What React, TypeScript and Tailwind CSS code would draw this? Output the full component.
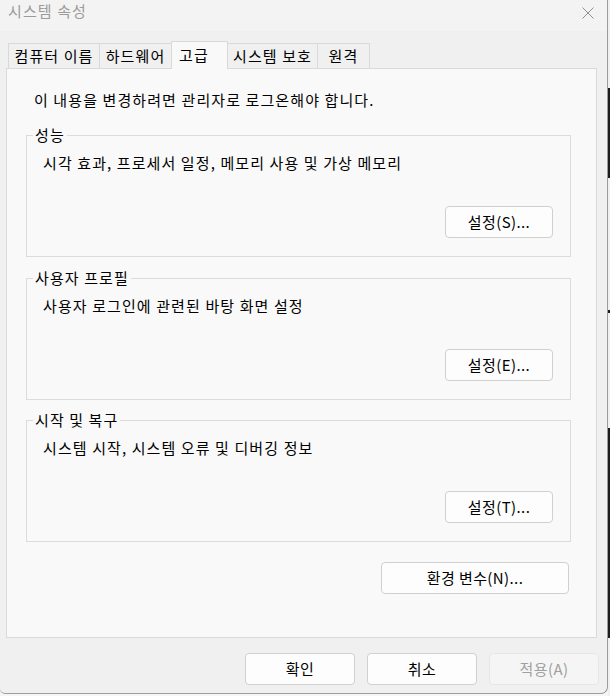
import React from "react";

function Btn({ label, w, disabled }: { label: string; w: string; disabled?: boolean }) {
  return (
    <div
      className={
        "h-[32px] flex items-center justify-center rounded-[4px] border leading-[20px] tracking-[0.4px] " +
        w +
        (disabled
          ? " bg-[#f5f5f5] border-[#e6e6e6] text-[#a0a0a0]"
          : " bg-[#fdfdfd] border-[#d0d0d0] text-black")
      }
    >
      {label}
    </div>
  );
}

function Group({ title, desc, btn, mt }: { title: string; desc: string; btn: string; mt: string }) {
  return (
    <fieldset className={"ml-[19px] w-[545px] h-[132px] border border-[#dcdcdc] flex flex-col " + mt}>
      <legend className="ml-[6px] px-[2px] leading-[20px]">{title}</legend>
      <div className="mt-[8px] ml-[16px] leading-[20px]">{desc}</div>
      <div className="mt-[33px] self-end mr-[17px]">
        <Btn label={btn} w="w-[108px]" />
      </div>
    </fieldset>
  );
}

export default function App() {
  return (
    <div className="w-[610px] h-[696px] bg-[#f6f6f6] flex overflow-hidden font-['Noto_Sans_CJK_KR','Noto_Sans',sans-serif] text-[15px] tracking-[1.1px] text-black">
      <div className="w-[608px] h-[694px] shrink-0 flex flex-col bg-[#f0f0f0] border-r border-b border-[#9c9c9c] rounded-br-[7px] rounded-bl-[5px] overflow-hidden">
        {/* title bar */}
        <div className="h-[31px] shrink-0 bg-[#f3f3f3] flex items-start justify-between pl-[8px] pr-[13px]">
          <div className="mt-[1px] leading-[20px] text-[#9b9b9b]">시스템 속성</div>
          <svg className="mt-[7px]" width="12" height="12" viewBox="0 0 12 12">
            <path d="M0.5 0.5 L11.5 11.5 M11.5 0.5 L0.5 11.5" stroke="#8f8f8f" strokeWidth="1" fill="none" />
          </svg>
        </div>
        {/* body */}
        <div className="flex-1 flex flex-col pt-[10px]">
          {/* tabs */}
          <div className="flex items-end h-[27px] pl-[8px] shrink-0">
            <div className="w-[92px] h-[25px] border-l border-t border-r border-[#d9d9d9] flex items-center justify-center leading-[20px]">
              컴퓨터 이름
            </div>
            <div className="w-[71px] h-[25px] border-t border-[#d9d9d9] flex items-center justify-center leading-[20px]">
              하드웨어
            </div>
            <div className="relative z-10 w-[57px] h-[28px] -mb-[1px] border-l border-t border-r border-[#d9d9d9] bg-[#f9f9f9] flex items-start justify-start pt-[3px] pl-[7px] leading-[20px]">
              고급
            </div>
            <div className="w-[90px] h-[25px] border-t border-r border-[#d9d9d9] flex items-center justify-center leading-[20px]">
              시스템 보호
            </div>
            <div className="w-[52px] h-[25px] border-t border-r border-[#d9d9d9] flex items-center justify-center leading-[20px]">
              원격
            </div>
          </div>
          {/* panel */}
          <div className="ml-[6px] w-[591px] h-[570px] shrink-0 border border-[#dadada] bg-[#f9f9f9] flex flex-col">
            <div className="mt-[21px] ml-[27px] leading-[20px]">이 내용을 변경하려면 관리자로 로그온해야 합니다.</div>
            <Group
              mt="mt-[15px]"
              title="성능"
              desc="시각 효과, 프로세서 일정, 메모리 사용 및 가상 메모리"
              btn="설정(S)..."
            />
            <Group mt="mt-[11px]" title="사용자 프로필" desc="사용자 로그인에 관련된 바탕 화면 설정" btn="설정(E)..." />
            <Group mt="mt-[10px]" title="시작 및 복구" desc="시스템 시작, 시스템 오류 및 디버깅 정보" btn="설정(T)..." />
            <div className="mt-[20px] self-end mr-[27px]">
              <Btn label="환경 변수(N)..." w="w-[188px]" />
            </div>
          </div>
          {/* bottom buttons */}
          <div className="mt-[15px] flex justify-end gap-[12px] pr-[8px]">
            <Btn label="확인" w="w-[110px]" />
            <Btn label="취소" w="w-[110px]" />
            <Btn label="적용(A)" w="w-[110px]" disabled />
          </div>
        </div>
      </div>
      <div className="w-[2px] flex flex-col">
        <div className="h-[88px] bg-[#f0f0f0]" />
        <div className="h-[90px] bg-[#1c1c1c]" />
        <div className="h-[132px] bg-[#f0f0f0]" />
        <div className="h-[3px] bg-[#1c1c1c]" />
        <div className="h-[115px] bg-[#f0f0f0]" />
        <div className="h-[210px] bg-[#1c1c1c]" />
        <div className="flex-1 bg-[#f0f0f0]" />
      </div>
    </div>
  );
}
